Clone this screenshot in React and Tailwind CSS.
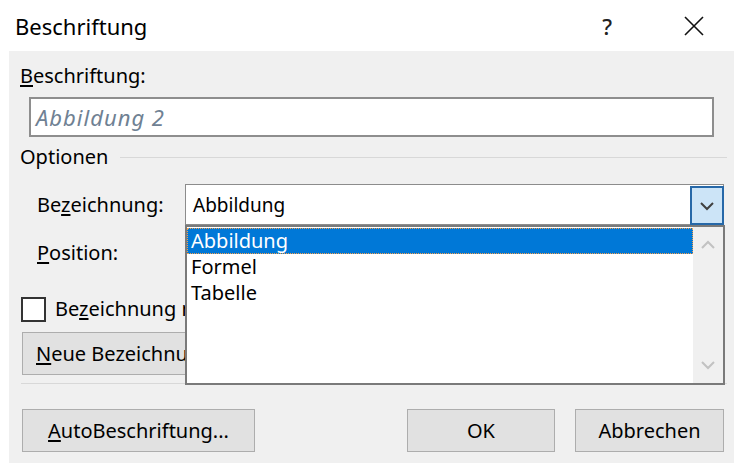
import { useState } from "react";

// Caption dialog with the label dropdown opened

const font = { fontFamily: '"Noto Sans", "Open Sans", sans-serif' };

function Chevron({ up = false, className = "" }) {
  return (
    <svg width="16" height="10" viewBox="0 0 16 10" className={className}>
      <polyline
        points={up ? "2,8 8,2 14,8" : "2,2 8,8 14,2"}
        fill="none"
        stroke="currentColor"
        strokeWidth="2"
      />
    </svg>
  );
}

function Button({ children, className = "" }) {
  return (
    <div
      className={`h-[43px] flex items-center border border-[#adadad] bg-[#e1e1e1] text-[20px] leading-[26px] text-black whitespace-nowrap ${className}`}
    >
      {children}
    </div>
  );
}

const OPTIONS = ["Abbildung", "Formel", "Tabelle"];

export default function App() {
  const [selected] = useState(0);

  return (
    <div
      className="w-[734px] h-[464px] bg-white overflow-hidden text-black"
      style={font}
    >
      {/* title bar */}
      <div className="h-[51px] flex items-center pl-[15px] pr-[30px]">
        <span className="text-[22px] leading-[28px] flex-1">Beschriftung</span>
        <span className="text-[22px] leading-[28px] font-medium text-[#222] mr-[72px]">?</span>
        <svg width="20" height="20" viewBox="0 0 20 20">
          <path d="M1 1 L19 19 M19 1 L1 19" stroke="#111" strokeWidth="1.6" />
        </svg>
      </div>

      {/* body */}
      <div className="ml-[9px] h-[412px] bg-[#f0f0f0] relative flex flex-col">
        <div className="h-[46px] pl-[11px] pt-[12px] text-[20px] leading-[26px]">
          <span className="underline underline-offset-2">B</span>eschriftung:
        </div>

        <div className="ml-[20px] w-[685px] h-[40px] border-2 border-[#8e8e8e] bg-white flex items-center pl-[5px]">
          <span className="italic text-[22px] leading-[28px] tracking-[1px] text-[#6f8193]">
            Abbildung 2
          </span>
        </div>

        <div className="mt-[8px] h-[24px] flex items-center pl-[11px] pr-[7px] text-[20px] leading-[26px]">
          <span>Optionen</span>
          <div className="flex-1 ml-[12px] h-px bg-[#d8d8d8]" />
        </div>

        {/* label combo */}
        <div className="mt-[15px] h-[41px] flex items-center">
          <div className="w-[176px] pl-[28px] text-[20px] leading-[26px]">
            Be<span className="underline underline-offset-2">z</span>eichnung:
          </div>
          <div className="w-[539px] h-[41px] border border-[#8c8c8c] bg-white relative flex items-center pl-[7px]">
            <span className="text-[19px] leading-[26px]">Abbildung</span>
            <div className="absolute right-[-1px] top-[1px] w-[34px] h-[39px] border-2 border-[#2668a8] bg-[#cce4f7] flex items-center justify-center text-[#404040]">
              <Chevron />
            </div>
          </div>
        </div>

        {/* position combo, mostly under the open list */}
        <div className="mt-[7px] h-[41px] flex items-center">
          <div className="w-[176px] pl-[28px] text-[20px] leading-[26px]">
            <span className="underline underline-offset-2">P</span>osition:
          </div>
          <div className="w-[539px] h-[41px] border border-[#8c8c8c] bg-white" />
        </div>

        <div className="mt-[24px] h-[24px] flex items-center pl-[12px] text-[20px] leading-[26px]">
          <div className="w-[25px] h-[25px] shrink-0 border-2 border-[#333] bg-white" />
          <span className="ml-[9px] w-[130px] overflow-hidden whitespace-nowrap">
            Be<span className="underline underline-offset-2">z</span>eichnung nicht verwenden
          </span>
        </div>

        <div className="mt-[11px] flex pl-[13px]">
          <Button className="w-[163px] pl-[13px] overflow-hidden border-r-0">
            <span className="underline underline-offset-2">N</span>eue Bezeichnung...
          </Button>
        </div>

        <div className="mt-[8px] ml-[12px] mr-[7px] h-px bg-[#d8d8d8]" />

        <div className="mt-[25px] flex pl-[13px]">
          <Button className="w-[233px] justify-center">
            <span className="underline underline-offset-2">A</span>utoBeschriftung...
          </Button>
          <Button className="w-[148px] justify-center ml-[152px]">OK</Button>
          <Button className="w-[149px] justify-center ml-[20px]">Abbrechen</Button>
        </div>

        {/* open dropdown list */}
        <div className="absolute left-[176px] top-[174px] w-[540px] h-[160px] border-2 border-[#7a7a7a] bg-white flex">
          <div className="flex-1 flex flex-col pt-px">
            {OPTIONS.map((opt, i) => (
              <div
                key={opt}
                className={
                  i === selected
                    ? "h-[26px] flex items-center pl-[3px] bg-[#0078d7] text-white border border-dotted border-[#f5a04c] text-[20px] leading-[26px]"
                    : "h-[26px] flex items-center pl-[4px] text-[20px] leading-[26px]"
                }
              >
                {opt}
              </div>
            ))}
          </div>
          <div className="w-[30px] bg-[#f0f0f0] flex flex-col items-center justify-between py-[13px] text-[#c2c2c2]">
            <Chevron up />
            <Chevron />
          </div>
        </div>
      </div>
    </div>
  );
}
